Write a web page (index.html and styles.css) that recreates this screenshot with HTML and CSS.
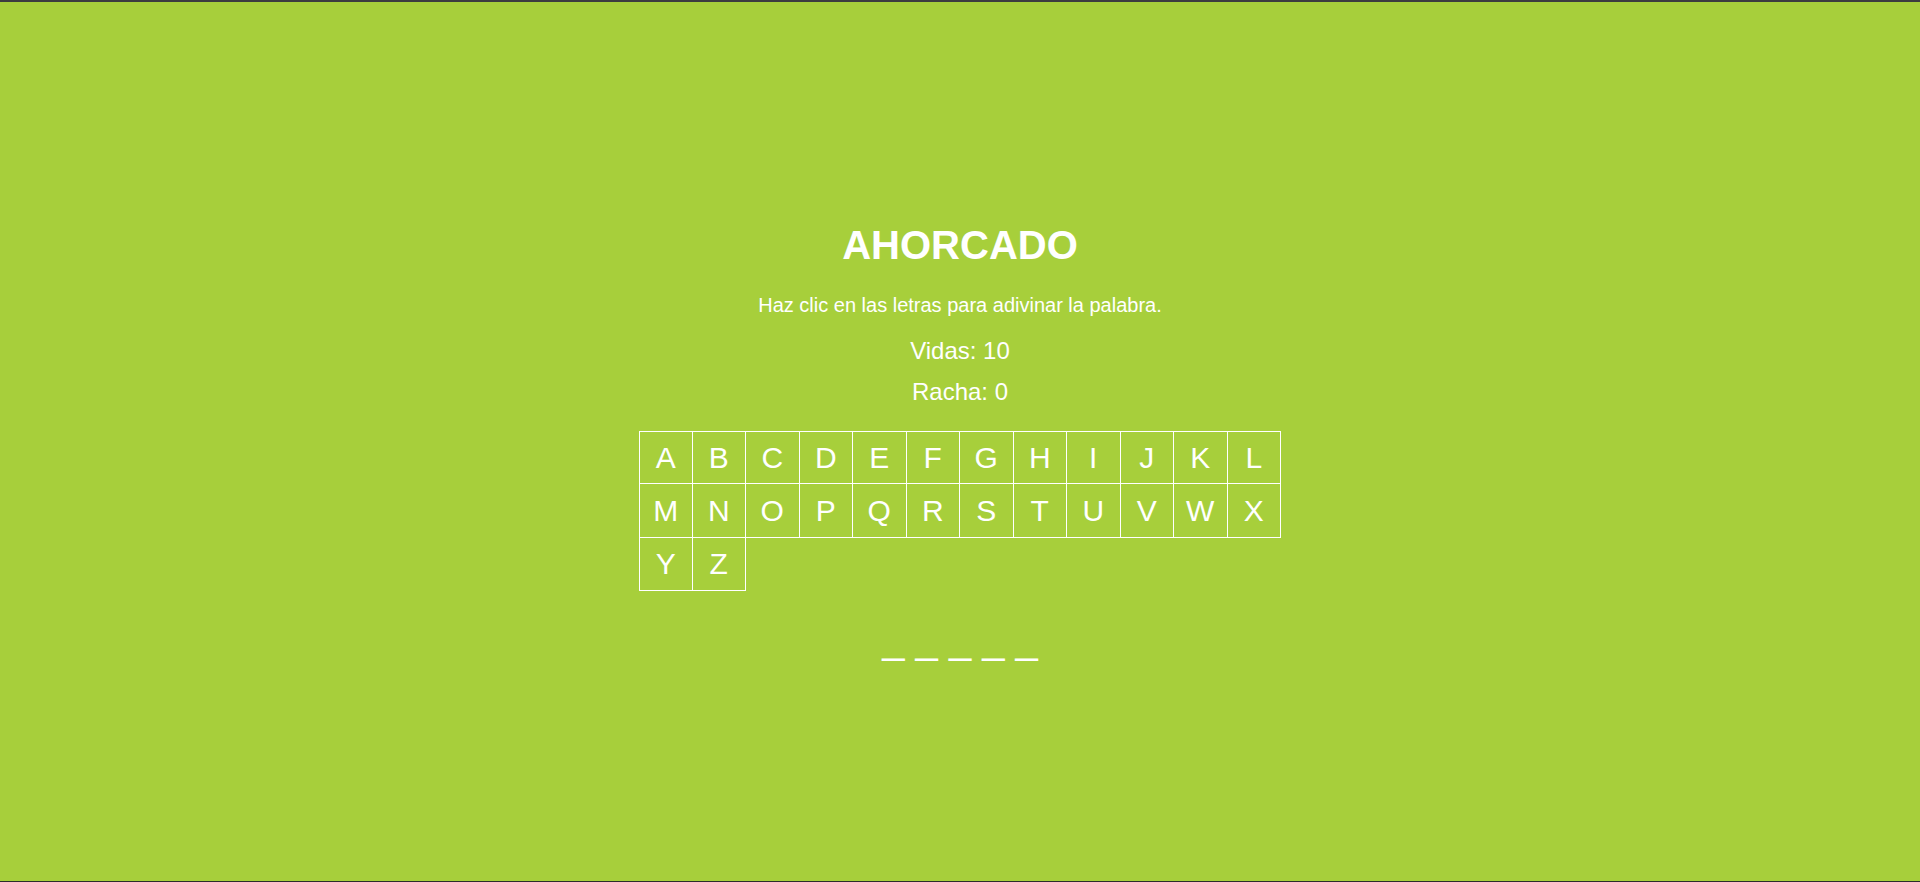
FILE: index.html
```html
<!DOCTYPE html>
<html lang="es">
<head>
<meta charset="utf-8">
<title>Ahorcado</title>
<link rel="stylesheet" href="styles.css">
</head>
<body>
<div class="frame">
  <main class="game">
    <h1 class="title">AHORCADO</h1>
    <p class="hint">Haz clic en las letras para adivinar la palabra.</p>
    <p class="stat">Vidas: 10</p>
    <p class="stat stat-streak">Racha: 0</p>
    <div class="letters">
      <button class="letter">A</button><button class="letter">B</button><button class="letter">C</button><button class="letter">D</button><button class="letter">E</button><button class="letter">F</button><button class="letter">G</button><button class="letter">H</button><button class="letter">I</button><button class="letter">J</button><button class="letter">K</button><button class="letter">L</button>
      <button class="letter">M</button><button class="letter">N</button><button class="letter">O</button><button class="letter">P</button><button class="letter">Q</button><button class="letter">R</button><button class="letter">S</button><button class="letter">T</button><button class="letter">U</button><button class="letter">V</button><button class="letter">W</button><button class="letter">X</button>
      <button class="letter">Y</button><button class="letter">Z</button>
    </div>
    <p class="word">_ _ _ _ _</p>
  </main>
</div>
</body>
</html>
```
FILE: styles.css
```css
html, body {
  margin: 0;
  padding: 0;
  height: 100%;
}
body {
  background: #2e2e2e;
  font-family: "Liberation Sans", Arial, sans-serif;
  color: #ffffff;
}
.frame {
  box-sizing: border-box;
  height: 882px;
  border-top: 2px solid #3c3c40;
  border-bottom: 1px solid #2b2b2b;
  background: #a7cf3b;
}
.game {
  display: flex;
  flex-direction: column;
  align-items: center;
  padding-top: 221px;
}
.title {
  margin: 0;
  font-size: 40px;
  font-weight: bold;
  line-height: normal;
}
.hint {
  margin: 25.5px 0 0;
  font-size: 20px;
  line-height: normal;
}
.stat {
  margin: 20px 0 0;
  font-size: 24px;
  line-height: normal;
}
.stat-streak {
  margin-top: 13.6px;
}
.letters {
  margin-top: 25px;
  display: grid;
  grid-template-columns: repeat(12, 53.5px);
  grid-auto-rows: 53.4px;
}
.letter {
  box-sizing: border-box;
  margin: 0;
  padding: 0;
  background: transparent;
  color: #ffffff;
  font-family: "Liberation Sans", Arial, sans-serif;
  font-size: 30px;
  border: 0;
  border-right: 1px solid #ffffff;
  border-bottom: 1px solid #ffffff;
  display: flex;
  align-items: center;
  justify-content: center;
  cursor: pointer;
}
.letter:nth-child(-n+12) {
  border-top: 1px solid #ffffff;
}
.letter:nth-child(12n+1) {
  border-left: 1px solid #ffffff;
}
.word {
  margin: 26px 0 0;
  font-size: 40px;
  line-height: normal;
}
```
